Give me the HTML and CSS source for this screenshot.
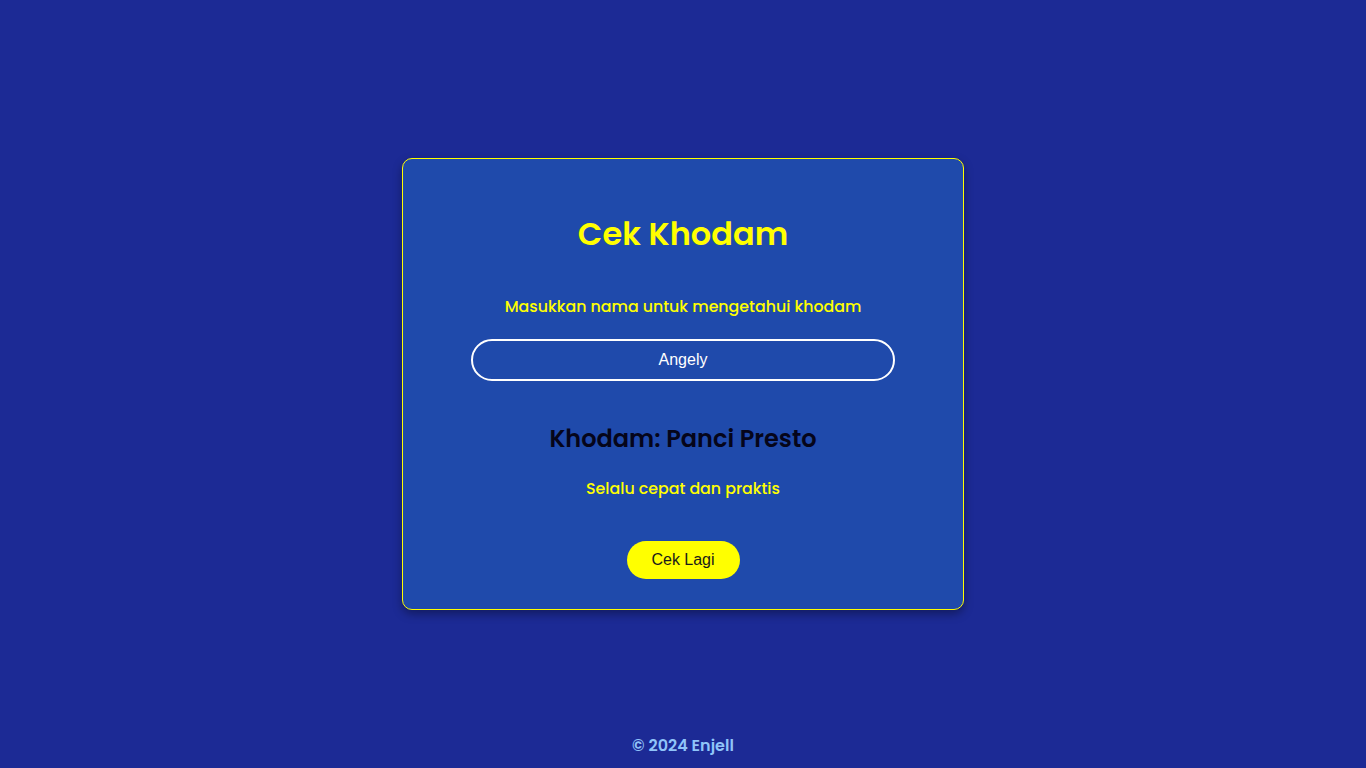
FILE: index.html
```html
<!DOCTYPE html>
<html lang="id">
<head>
<meta charset="utf-8">
<title>Cek Khodam</title>
<link rel="stylesheet" href="styles.css">
</head>
<body>
<div class="page">
  <div class="spacer"></div>
  <main class="card">
    <h1 class="title">Cek Khodam</h1>
    <p class="subtitle">Masukkan nama untuk mengetahui khodam</p>
    <input class="name-input" type="text" value="Angely">
    <h2 class="result">Khodam: Panci Presto</h2>
    <p class="desc">Selalu cepat dan praktis</p>
    <button class="btn">Cek Lagi</button>
  </main>
  <footer class="footer">© 2024 Enjell</footer>
</div>
</body>
</html>
```
FILE: styles.css
```css
html, body {
  margin: 0;
  padding: 0;
  height: 100%;
}
body {
  background: #1c2a95;
  font-family: "Poppins", "Open Sans", sans-serif;
}
.page {
  height: 100vh;
  display: grid;
  grid-template-rows: 1fr auto 1fr;
  justify-items: center;
}
.card {
  box-sizing: border-box;
  width: 562px;
  background: #1f4aab;
  border: 1px solid #ffff00;
  border-radius: 10px;
  box-shadow: 0 4px 10px rgba(0, 0, 0, 0.35);
  padding: 51px 68px 30px;
  display: flex;
  flex-direction: column;
  align-items: center;
  text-align: center;
}
.title {
  margin: 0;
  font-size: 32px;
  line-height: 48px;
  font-weight: 600;
  color: #ffff00;
}
.subtitle {
  margin: 37px 0 0;
  font-size: 15.8px;
  line-height: 24px;
  font-weight: 500;
  color: #ffff00;
}
.name-input {
  box-sizing: border-box;
  margin-top: 20px;
  width: 424px;
  height: 42px;
  border: 2px solid #ffffff;
  border-radius: 21px;
  background: transparent;
  color: #ffffff;
  text-align: center;
  font-family: "Liberation Sans", Arial, sans-serif;
  font-size: 16px;
  outline: none;
}
.result {
  margin: 40px 0 0;
  font-size: 24px;
  line-height: 36px;
  font-weight: 600;
  color: #05051a;
}
.desc {
  margin: 20px 0 0;
  font-size: 15.8px;
  line-height: 24px;
  font-weight: 500;
  color: #ffff00;
}
.btn {
  margin-top: 40px;
  width: 113px;
  height: 38px;
  border: none;
  border-radius: 19px;
  background: #ffff00;
  color: #1a1a1a;
  font-family: "Liberation Sans", Arial, sans-serif;
  font-size: 16px;
  cursor: pointer;
}
.footer {
  align-self: end;
  padding-bottom: 10px;
  font-size: 16px;
  line-height: 24px;
  font-weight: 600;
  color: #90c4f9;
}
```
